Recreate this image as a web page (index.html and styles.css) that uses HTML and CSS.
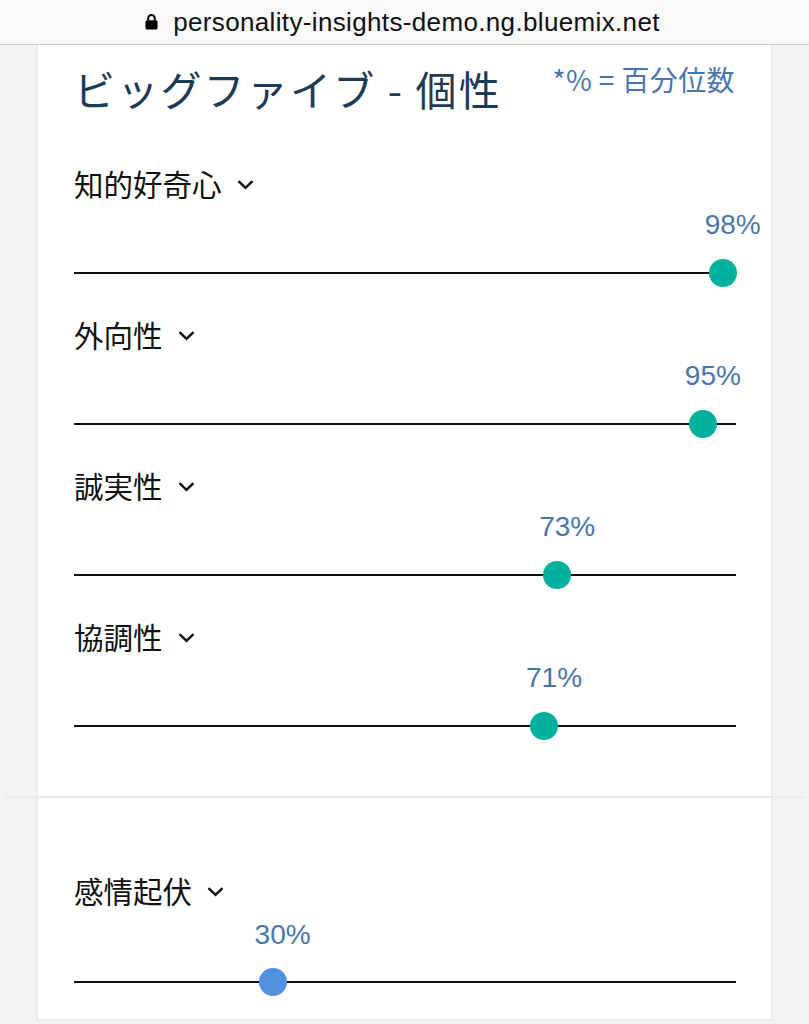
FILE: index.html
```html
<!DOCTYPE html>
<html lang="ja">
<head>
<meta charset="utf-8">
<title>Personality Insights</title>
<link rel="stylesheet" href="styles.css">
</head>
<body>
<div class="urlbar">
  <svg class="lock" width="13" height="17" viewBox="0 0 13 17"><path d="M3.2 7.5V5.2a3.3 3.3 0 0 1 6.6 0v2.3" fill="none" stroke="#000" stroke-width="2"/><rect x="0.5" y="7.3" width="12" height="9.2" rx="1.5" fill="#000"/></svg>
  <span class="url">personality-insights-demo.ng.bluemix.net</span>
</div>
<main class="page">
  <section class="card card-top">
    <header class="head">
      <h1 class="title">ビッグファイブ - 個性</h1>
      <span class="note">*% = 百分位数</span>
    </header>
    <div class="trait">
      <div class="label">知的好奇心<svg class="chev" width="17" height="11" viewBox="0 0 17 11"><path d="M1.5 2.2l7 6.6 7-6.6" fill="none" stroke="#111" stroke-width="2.5"/></svg></div>
      <div class="pct-row"><span class="pct" style="left:98%">98%</span></div>
      <div class="track"><span class="thumb" style="left:98%"></span></div>
    </div>
    <div class="trait">
      <div class="label">外向性<svg class="chev" width="17" height="11" viewBox="0 0 17 11"><path d="M1.5 2.2l7 6.6 7-6.6" fill="none" stroke="#111" stroke-width="2.5"/></svg></div>
      <div class="pct-row"><span class="pct" style="left:95%">95%</span></div>
      <div class="track"><span class="thumb" style="left:95%"></span></div>
    </div>
    <div class="trait">
      <div class="label">誠実性<svg class="chev" width="17" height="11" viewBox="0 0 17 11"><path d="M1.5 2.2l7 6.6 7-6.6" fill="none" stroke="#111" stroke-width="2.5"/></svg></div>
      <div class="pct-row"><span class="pct" style="left:73%">73%</span></div>
      <div class="track"><span class="thumb" style="left:73%"></span></div>
    </div>
    <div class="trait last">
      <div class="label">協調性<svg class="chev" width="17" height="11" viewBox="0 0 17 11"><path d="M1.5 2.2l7 6.6 7-6.6" fill="none" stroke="#111" stroke-width="2.5"/></svg></div>
      <div class="pct-row"><span class="pct" style="left:71%">71%</span></div>
      <div class="track"><span class="thumb" style="left:71%"></span></div>
    </div>
  </section>
  <div class="divider"></div>
  <section class="card card-bottom">
    <div class="trait emo">
      <div class="label">感情起伏<svg class="chev" width="17" height="11" viewBox="0 0 17 11"><path d="M1.5 2.2l7 6.6 7-6.6" fill="none" stroke="#111" stroke-width="2.5"/></svg></div>
      <div class="pct-row"><span class="pct" style="left:30%">30%</span></div>
      <div class="track"><span class="thumb blue" style="left:30%"></span></div>
    </div>
  </section>
</main>
</body>
</html>
```

FILE: styles.css
```css
* { box-sizing: border-box; }
html, body { margin: 0; padding: 0; }
body {
  background: #f3f3f3;
  font-family: "Noto Sans CJK JP", "Liberation Sans", sans-serif;
  color: #111;
}
.urlbar {
  height: 45px;
  background: #f8f8f8;
  border-bottom: 1px solid #c9c9c9;
  display: flex;
  align-items: center;
  justify-content: center;
  gap: 15px;
  padding-right: 4px;
}
.lock { display: block; margin-top: -1px; }
.url {
  font-family: "Liberation Sans", "Noto Sans", sans-serif;
  font-size: 26px;
  color: #111;
  letter-spacing: 0.35px;
}
.page { padding-bottom: 40px; }
.card {
  margin-left: 36px;
  width: 737px;
  background: #fff;
  border-left: 2px solid #ebebeb;
  border-right: 2px solid #ebebeb;
  padding-left: 36px;
  padding-right: 35px;
}
.card-top { padding-top: 16px; padding-bottom: 56px; }
.card-bottom { padding-top: 74px; padding-bottom: 23px; border-bottom: 2px solid #ebebeb; }
.divider {
  height: 2px;
  background: #ebebeb;
  margin: 0 5px;
}
.head {
  display: flex;
  justify-content: space-between;
  align-items: flex-start;
  margin-bottom: 53px;
}
.title {
  margin: 3px 0 0 0;
  font-size: 41px;
  line-height: 48px;
  font-weight: 400;
  color: #1d3b57;
  letter-spacing: 2.2px;
}
.note {
  font-size: 28px;
  line-height: 36px;
  color: #4a76ae;
  margin-right: 1px;
  letter-spacing: 0.4px;
}
.trait { margin-bottom: 29px; }
.trait.last { margin-bottom: 0; }
.trait.emo { margin-bottom: 0; }
.label {
  display: flex;
  align-items: center;
  font-size: 29.5px;
  line-height: 36px;
  height: 36px;
  color: #111;
}
.chev { margin-left: 15px; margin-top: 2px; }
.pct-row {
  position: relative;
  height: 32px;
  margin-top: 8px;
}
.emo .pct-row { margin-top: 11px; }
.pct {
  position: absolute;
  top: 0;
  transform: translateX(calc(-50% + 10px));
  font-family: "Liberation Sans", "Noto Sans", sans-serif;
  font-size: 28px;
  line-height: 32px;
  color: #4a76ae;
  white-space: nowrap;
}
.track {
  position: relative;
  height: 28px;
  margin-top: 18px;
}
.emo .track { margin-top: 17px; }
.track::before {
  content: "";
  position: absolute;
  left: 0;
  right: 0;
  top: 13px;
  height: 2px;
  background: #111;
}
.thumb {
  position: absolute;
  top: 0;
  width: 28px;
  height: 28px;
  margin-left: -14px;
  border-radius: 50%;
  background: #00b29d;
}
.thumb.blue { background: #5390e1; }
```
